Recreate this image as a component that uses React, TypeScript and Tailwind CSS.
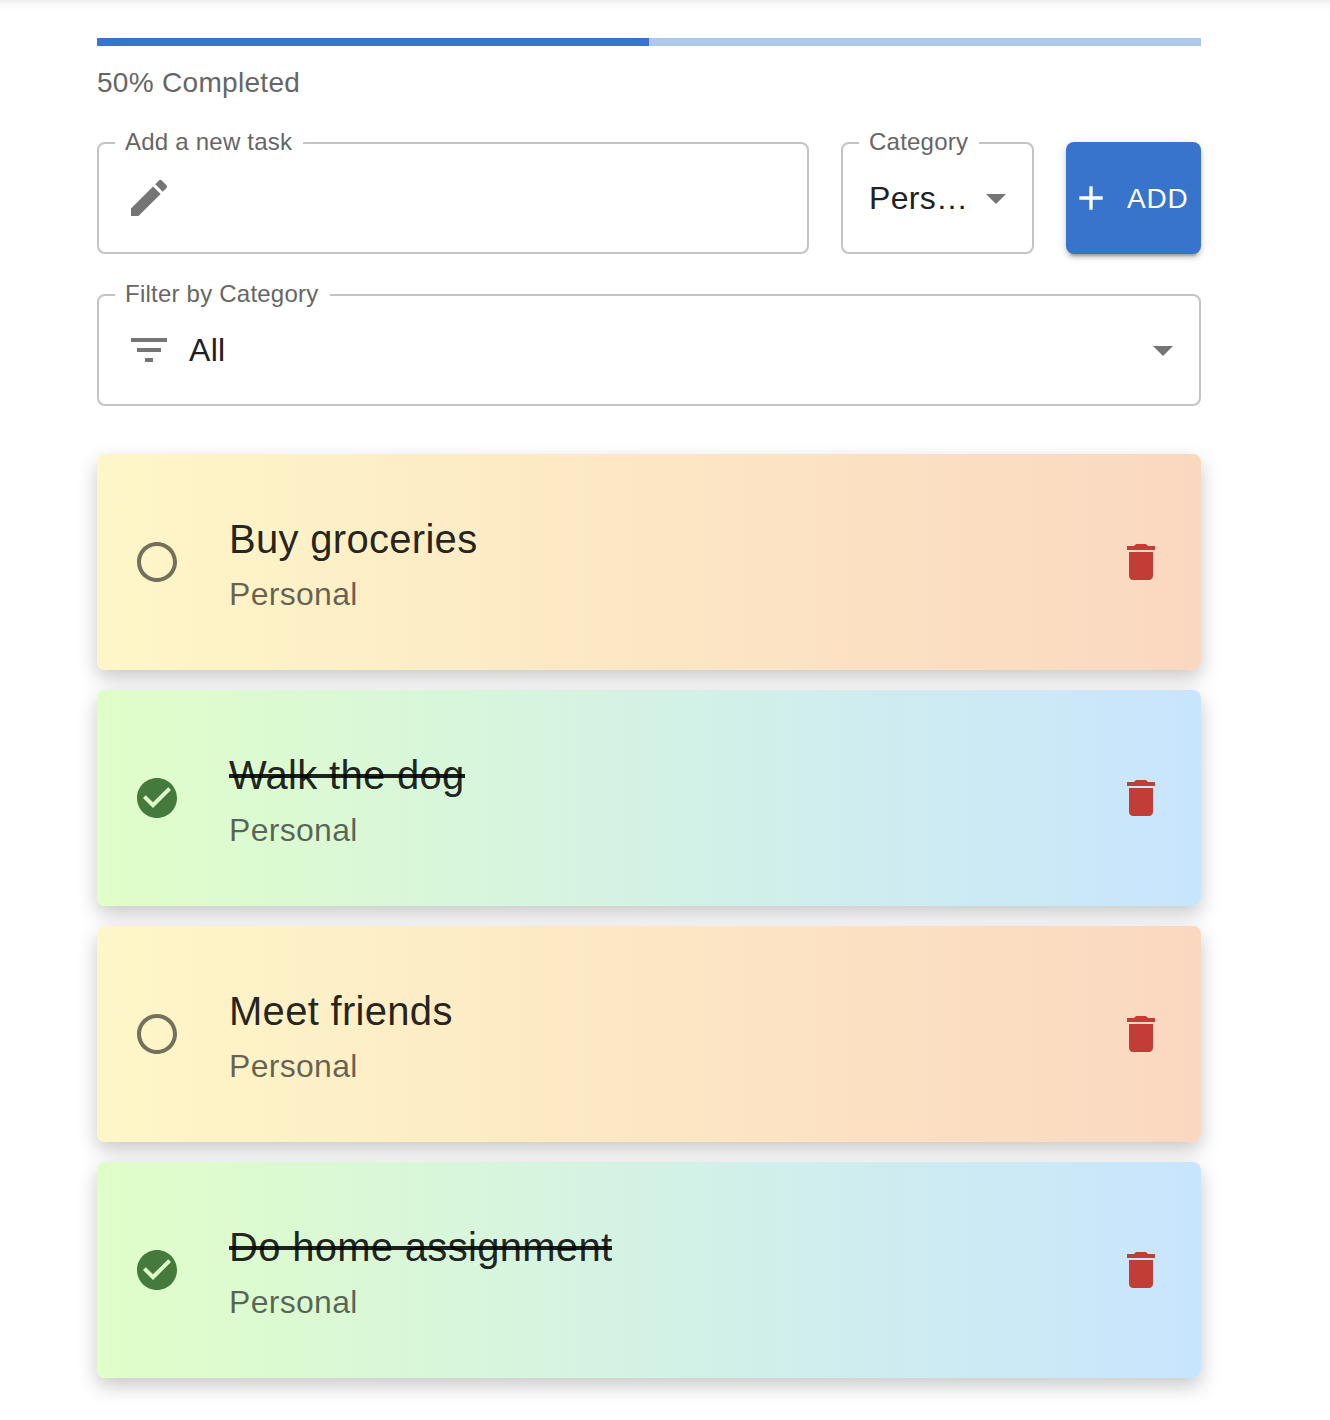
import React from "react";

const TASKS = [
  { title: "Buy groceries", category: "Personal", done: false },
  { title: "Walk the dog", category: "Personal", done: true },
  { title: "Meet friends", category: "Personal", done: false },
  { title: "Do home assignment", category: "Personal", done: true },
];

const PATHS = {
  edit: "M3 17.25V21h3.75L17.81 9.94l-3.75-3.75zM20.71 7.04c.39-.39.39-1.02 0-1.41l-2.34-2.34a.996.996 0 0 0-1.41 0l-1.83 1.83 3.75 3.75z",
  arrow: "m7 10 5 5 5-5z",
  add: "M19 13h-6v6h-2v-6H5v-2h6V5h2v6h6z",
  filter: "M10 18h4v-2h-4zM3 6v2h18V6zm3 7h12v-2H6z",
  circle: "M12 2C6.48 2 2 6.48 2 12s4.48 10 10 10 10-4.48 10-10S17.52 2 12 2m0 18c-4.42 0-8-3.58-8-8s3.58-8 8-8 8 3.58 8 8-3.58 8-8 8",
  check: "M12 2C6.48 2 2 6.48 2 12s4.48 10 10 10 10-4.48 10-10S17.52 2 12 2m-2 15-5-5 1.41-1.41L10 14.17l7.59-7.59L19 8z",
  trash: "M6 19c0 1.100.9 2 2 2h8c1.100 0 2-.9 2-2V7H6zM19 4h-3.500l-1-1h-5l-1 1H5v2h14z",
};

function Icon({ name, className }: { name: keyof typeof PATHS; className: string }) {
  return (
    <svg viewBox="0 0 24 24" fill="currentColor" className={`shrink-0 ${className}`} aria-hidden="true">
      <path d={PATHS[name]} />
    </svg>
  );
}

function Field({ label, className, legend, children }: { label: string; className: string; legend: string; children: React.ReactNode }) {
  return (
    <div className={`relative flex h-28 items-center rounded-lg border-2 border-[#c4c4c4] ${className}`}>
      <span className={`absolute -top-[16px] left-4 flex h-7 items-center bg-white pl-[10px] text-[24px] leading-7 tracking-[0.00938em] whitespace-nowrap text-[#666666] ${legend}`}>
        {label}
      </span>
      {children}
    </div>
  );
}

function TaskCard({ title, category, done }: { title: string; category: string; done: boolean }) {
  return (
    <li
      className={`flex h-[216px] items-center rounded-lg px-9 shadow-[0_8px_20px_rgba(0,0,0,0.22)] bg-linear-to-r ${
        done ? "from-[#e0fec8] to-[#c8e5fe]" : "from-[#fef6c8] to-[#fad8c0]"
      }`}
    >
      <button className={done ? "text-[#447a3c]" : "text-black/54"} aria-label="Toggle task">
        <Icon name={done ? "check" : "circle"} className="block size-12" />
      </button>
      <div className="ml-12 flex-1">
        <p className="h-16 pt-px text-[40px] leading-16 tracking-[0.0075em] text-black/87">
          <span
            className={
              done ? "relative inline-block after:absolute after:inset-x-0 after:top-[31px] after:h-1 after:bg-black/87" : ""
            }
          >
            {title}
          </span>
        </p>
        <p className="text-[32px] leading-12 tracking-[0.00938em] text-black/60">{category}</p>
      </div>
      <button className="text-[#c23d35]" aria-label="Delete task">
        <Icon name="trash" className="block size-12" />
      </button>
    </li>
  );
}

export default function App() {
  return (
    <div className="min-h-[1420px] overflow-hidden bg-white font-['Liberation_Sans',Arial,sans-serif]">
      <header className="-mx-10 -mt-[122px] mb-2.5 h-28 bg-[#3873cc] shadow-[0_4px_8px_-2px_rgba(0,0,0,0.2),0_8px_10px_0_rgba(0,0,0,0.14),0_2px_20px_0_rgba(0,0,0,0.12)]" />
      <main className="mx-[97px] w-[1104px] pt-[38px]">
        <div className="h-2 bg-[#aec8ea]">
          <div className="h-full w-1/2 bg-[#3873cc]" />
        </div>
        <p className="mt-[17px] text-[28px] leading-10 tracking-[0.01071em] text-[#666666]">50% Completed</p>

        <div className="mt-[39px] flex gap-8">
          <Field label="Add a new task" className="w-[712px] pl-[26px]" legend="w-[188px]">
            <Icon name="edit" className="size-12 text-[#757575]" />
          </Field>
          <Field label="Category" className="w-[193px] pl-[26px]" legend="w-[120px]">
            <span className="w-[100px] text-[32px] leading-[46px] tracking-[0.00938em] whitespace-nowrap text-[#212121]">Pers…</span>
            <Icon name="arrow" className="ml-[3px] size-12 text-[#757575]" />
          </Field>
          <button className="flex h-28 w-[135px] items-center rounded-lg bg-[#3873cc] pl-[5px] text-white shadow-[0_6px_2px_-4px_rgba(0,0,0,0.2),0_4px_4px_0_rgba(0,0,0,0.14),0_2px_10px_0_rgba(0,0,0,0.12)]">
            <Icon name="add" className="size-10" />
            <span className="ml-4 text-[28px] leading-[49px] tracking-[0.02857em]">ADD</span>
          </button>
        </div>

        <Field label="Filter by Category" className="mt-10 w-full pr-3 pl-[26px]" legend="w-[215px]">
          <Icon name="filter" className="size-12 text-[#757575]" />
          <span className="ml-4 flex-1 text-[32px] leading-[46px] tracking-[0.00938em] text-[#212121]">All</span>
          <Icon name="arrow" className="size-12 text-[#757575]" />
        </Field>

        <ul className="mt-12 flex flex-col gap-5">
          {TASKS.map((task) => (
            <TaskCard key={task.title} {...task} />
          ))}
        </ul>
      </main>
    </div>
  );
}
